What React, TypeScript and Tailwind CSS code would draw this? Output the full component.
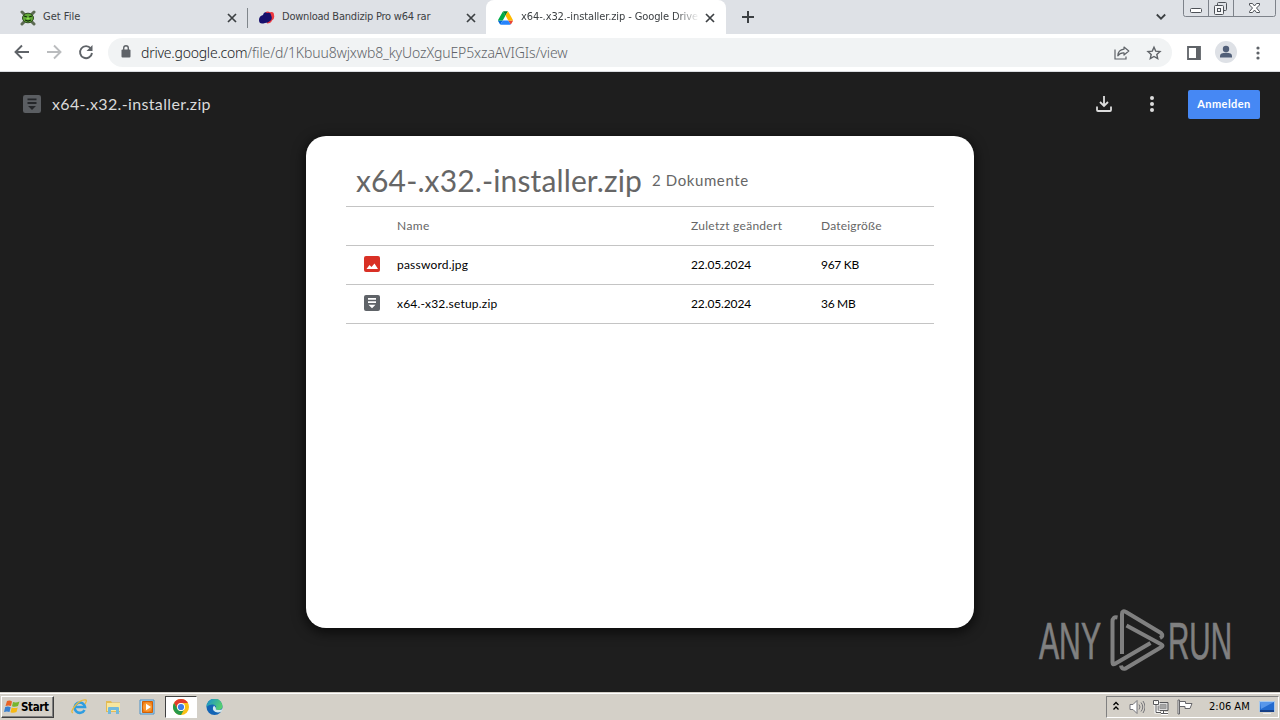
import React from "react";

const tahoma = "font-['DejaVu_Sans_Condensed','DejaVu_Sans',sans-serif] [font-stretch:condensed]";
const google = "font-['Lato',sans-serif]";

function Close({ className = "" }: { className?: string }) {
  return (
    <svg className={className} width="10" height="10" viewBox="0 0 10 10" stroke="#3c4043" strokeWidth="1.7">
      <path d="M1 1l8 8M9 1l-8 8" />
    </svg>
  );
}

function ZipIcon({ size, bg, fg }: { size: number; bg: string; fg: string }) {
  return (
    <svg width={size} height={size} viewBox="0 0 16 16">
      <rect width="16" height="16" rx="2" fill={bg} />
      <path d="M4 3h8v1.7H4zM4 6.300h8V8H4zM4.500 9.700h7L8 13.300z" fill={fg} />
    </svg>
  );
}

function DriveLogo() {
  return (
    <svg width="15" height="14" viewBox="0 0 87.3 78">
      <path d="m6.6 66.85 3.85 6.65c.8 1.4 1.95 2.5 3.3 3.3l13.75-23.8h-27.5c0 1.55.4 3.1 1.2 4.5z" fill="#0066da" />
      <path d="m43.65 25-13.75-23.8c-1.35.8-2.5 1.9-3.3 3.3l-25.4 44a9 9 0 0 0-1.2 4.5h27.5z" fill="#00ac47" />
      <path d="m73.55 76.8c1.35-.8 2.5-1.9 3.3-3.3l1.6-2.75 7.65-13.25c.8-1.4 1.2-2.95 1.2-4.5h-27.5l5.85 11.5z" fill="#ea4335" />
      <path d="m43.65 25 13.75-23.8c-1.35-.8-2.9-1.2-4.5-1.2h-18.5c-1.6 0-3.15.45-4.5 1.2z" fill="#00832d" />
      <path d="m59.8 53h-32.3l-13.75 23.8c1.35.8 2.9 1.2 4.5 1.2h50.8c1.6 0 3.15-.45 4.5-1.2z" fill="#2684fc" />
      <path d="m73.4 26.5-12.7-22c-.8-1.4-1.95-2.5-3.3-3.3l-13.75 23.8 16.15 28h27.45c0-1.55-.4-3.1-1.2-4.5z" fill="#ffba00" />
    </svg>
  );
}

function TabStrip() {
  return (
    <div className={`flex h-[34px] bg-[#dee1e6] text-[11px] text-[#3c4043] ${tahoma}`}>
      <div className="flex w-[247px] items-center pt-px pl-5">
        <svg width="16" height="16" viewBox="0 0 16 16">
          <path d="M2 2l3 3M14 2l-3 3M2 14l3-3M14 14l-3-3" stroke="#5d6b54" strokeWidth="3" strokeLinecap="round" />
          <ellipse cx="8" cy="8" rx="5.500" ry="4.800" fill="#62a838" stroke="#2f4a20" />
          <path d="M4 6l3 1M9 7l3-1M5 10l3 1 3-1" stroke="#102b08" strokeWidth="1.300" fill="none" />
          <path d="M6.500 8.500h3" stroke="#8be04a" strokeWidth="1.600" />
        </svg>
        <span className="ml-[7px] w-[184px] whitespace-nowrap">Get File</span>
        <Close />
      </div>
      <div className="flex w-[239px] items-center pt-px">
        <div className="h-5 w-px bg-[#80868b]" />
        <svg className="ml-[10px]" width="17" height="14" viewBox="0 0 17 14">
          <path d="M7 2Q9-.5 12 1.200 16 0 16 4q1 4-2 5.500-1 3-5 3z" fill="#ee3840" />
          <path d="M5 4Q6 0 9 2q4-1 4 2 2 4-1 6-2 2-5 2-6 2-6-3Q1 5 5 4z" fill="#17106d" />
        </svg>
        <span className="ml-[7px] w-[184px] tracking-[-0.22px] whitespace-nowrap">Download Bandizip Pro w64 rar</span>
        <Close />
      </div>
      <div className="relative flex w-60 items-center rounded-t-lg bg-white pt-px pl-3">
        <DriveLogo />
        <span className="ml-2 w-[178px] tracking-[-0.1px] whitespace-nowrap [mask-image:linear-gradient(to_right,black_155px,transparent_178px)]">x64-.x32.-installer.zip - Google Drive</span>
        <Close className="ml-[6px]" />
      </div>
      <svg className="mt-[11px] ml-[16px]" width="12" height="12" viewBox="0 0 12 12" stroke="#3c4043" strokeWidth="2">
        <path d="M6 0v12M0 6h12" />
      </svg>
      <svg className="mt-[13px] ml-[402px]" width="10" height="8" viewBox="0 0 10 8" fill="none" stroke="#3c4043" strokeWidth="1.800">
        <path d="M.8 1.500l4.200 4.200 4.200-4.200" />
      </svg>
      <svg className="ml-[17px]" width="94" height="18" viewBox="0 0 94 18" fill="none" stroke="#7d828a">
        <path d="M.5 0v14.500q0 2 2 2h88q2 0 2-2V0M25.500 0v16M50.500 0v16" />
        <g stroke="#4d5157">
          <rect x="7.500" y="8.500" width="11" height="4" rx="1" fill="#fff" />
          <rect x="34.500" y="2.500" width="9" height="8" rx="1" />
          <rect x="31.500" y="5.500" width="9" height="9" rx="1" fill="#f4f5f7" />
          <rect x="34.500" y="8.500" width="3" height="3" />
          <path d="M66.500 3.500h3l2 2.500 2-2.500h3v1.500L73.500 8l3 3.500v1h-3l-2-2.500-2 2.500h-3v-1l3-3.500-3-3z" fill="#fff" />
        </g>
      </svg>
    </div>
  );
}

function Toolbar() {
  return (
    <div className={`flex h-[38px] items-center border-b border-[#dadce0] bg-white ${tahoma}`}>
      <svg className="-mt-[2px] ml-[14px]" width="80" height="16" viewBox="0 0 80 16" fill="none" strokeWidth="1.900">
        <path d="M15 8H2M8 1.500L1.500 8 8 14.500" stroke="#5f6368" />
        <path d="M33 8h13M40 1.500L46.500 8 40 14.500" stroke="#babcbe" />
        <path d="M76.800 4.500A6 6 0 1 0 78 9" stroke="#5f6368" />
        <path d="M78.500 1v6h-6z" fill="#5f6368" />
      </svg>
      <div className="ml-[14px] flex h-[29px] w-[1064px] items-center rounded-full bg-[#f1f3f4] pl-[13px]">
        <svg className="-mt-[2px]" width="10" height="13" viewBox="0 0 10 13">
          <rect x=".5" y="4.500" width="9" height="8" rx="1" fill="#5f6368" />
          <path d="M2.700 5V3a2.300 2.300 0 0 1 4.600 0v2" fill="none" stroke="#5f6368" strokeWidth="1.400" />
        </svg>
        <div className="ml-[10px] w-[973px] font-['Noto_Sans',sans-serif] text-[14px] font-light whitespace-nowrap text-[#5f6368]">
          <span className="tracking-[-0.23px] text-[#202124]">drive.google.com</span><span className="tracking-[-0.12px]">/file/d/1Kbuu8wjxwb8_kyUozXguEP5xzaAVIGIs/view</span>
        </div>
        <svg width="16" height="14" viewBox="0 0 16 14" fill="none" stroke="#5f6368" strokeWidth="1.200">
          <path d="M1 3.500V13h11v-2.500" />
          <path d="M10 1l4.800 4L10 9V6.800Q6 6.500 3.800 9.800 4 4 10 3.200z" strokeLinejoin="round" />
        </svg>
        <svg className="ml-4" width="16" height="16" viewBox="0 0 16 16" fill="none" stroke="#5f6368" strokeWidth="1.400">
          <path d="M8 2.200l1.700 3.900 4.300.4-3.200 2.900.9 4.300L8 11.500l-3.700 2.200.9-4.300L2 6.500l4.300-.4z" />
        </svg>
      </div>
      <svg className="ml-[15px]" width="14" height="14" viewBox="0 0 14 14">
        <path d="M1 1h12v12H1z" fill="none" stroke="#5f6368" strokeWidth="1.800" />
        <path d="M9 1h4v12H9z" fill="#5f6368" />
      </svg>
      <svg className="-mt-px ml-[14px]" width="22" height="22" viewBox="0 0 22 22">
        <circle cx="11" cy="11" r="11" fill="#dee1e6" />
        <circle cx="11" cy="8" r="3.200" fill="#515f78" />
        <path d="M5 16.500v-1.500q0-3.200 6-3.200t6 3.200v1.500z" fill="#515f78" />
      </svg>
      <svg className="ml-[19px]" width="4" height="14" viewBox="0 0 4 14" fill="#5f6368">
        <circle cx="2" cy="2" r="1.600" /><circle cx="2" cy="7" r="1.600" /><circle cx="2" cy="12" r="1.600" />
      </svg>
    </div>
  );
}

function Row({ icon, name, date, size, head = false }: { icon?: React.ReactNode; name: string; date: string; size: string; head?: boolean }) {
  return (
    <div className={`flex h-[39px] items-center border-b border-[#c4c4c4] pl-[18px] text-[12px] whitespace-nowrap ${head ? "text-[#666]" : "text-black"}`}>
      <div className="w-[33px]">{icon}</div>
      <div className="w-[294px]"><span className={head ? "tracking-[0.4px]" : "tracking-[0.2px]"}>{name}</span></div>
      <div className="w-[130px]"><span className={head ? "tracking-[0.28px]" : "tracking-[-0.12px]"}>{date}</span></div>
      <div className={head ? "tracking-[0.2px]" : "tracking-[-0.3px]"}>{size}</div>
    </div>
  );
}

function Watermark() {
  return (
    <svg className="absolute top-[536px] left-[1036px]" width="200" height="68" viewBox="1036 608 200 68" fill="#808080">
      <g className="font-['Liberation_Sans_Narrow','Liberation_Sans',sans-serif]" fontSize="52" stroke="#808080" strokeWidth=".7">
        <text x="1039" y="659" textLength="62" lengthAdjust="spacingAndGlyphs">ANY</text>
        <text x="1168" y="659" textLength="64" lengthAdjust="spacingAndGlyphs">RUN</text>
      </g>
      <g fill="none" stroke="#808080" strokeWidth="4" strokeLinejoin="round">
        <path d="M1117.500 617.500q-5-1-5 4v41q0 3 3 1l35-20.500" />
        <path d="M1122 654v-40q0-4 4-2l35 21q3 3-1 5" />
        <path d="M1126.500 625.500l35 19q2 1 0 2.500l-36 21.500q-4 1-4.500-3" />
      </g>
    </svg>
  );
}

function Viewer() {
  return (
    <main className={`relative h-[620px] bg-[#1e1e1e] ${google}`}>
      <div className="flex h-16 items-center pl-[23px] text-[#dadada]">
        <ZipIcon size={18} bg="#5b5e62" fg="#25272a" />
        <span className="-mt-px ml-[11px] w-[1044px] text-[16px] tracking-[0.35px]">x64-.x32.-installer.zip</span>
        <svg width="16" height="16" viewBox="0 0 16 16" fill="none" stroke="#ddd" strokeWidth="1.800">
          <path d="M8 0v10M4 6l4 4 4-4M1 10.500V14q0 1 1 1h12q1 0 1-1v-3.500" />
        </svg>
        <svg className="ml-[38px]" width="4" height="16" viewBox="0 0 4 16" fill="#ddd">
          <circle cx="2" cy="2" r="2" /><circle cx="2" cy="8" r="2" /><circle cx="2" cy="14" r="2" />
        </svg>
        <button className="ml-[34px] h-[29px] w-[72px] rounded-[2px] bg-[#4688f4] text-[11px] font-bold tracking-[0.45px] text-white">Anmelden</button>
      </div>
      <section className="mx-auto h-[492px] w-[668px] rounded-[20px] bg-white px-10 shadow-[0_3px_12px_2px_rgba(0,0,0,0.6)]">
        <div className="flex h-[71px] items-end border-b border-[#c4c4c4] pl-[10px] whitespace-nowrap text-[#666]">
          <h1 className="w-[296px] pb-[8px] text-[30px] leading-9 tracking-[0.13px]">x64-.x32.-installer.zip</h1>
          <span className="pb-[16px] text-[15px] leading-5 tracking-[0.6px]">2 Dokumente</span>
        </div>
        <Row head name="Name" date="Zuletzt geändert" size="Dateigröße" />
        <Row
          icon={
            <svg className="-mt-[2px]" width="16" height="16" viewBox="0 0 16 16">
              <rect width="16" height="16" rx="2" fill="#d93025" />
              <path d="M2.500 13l3-4 2 2 3-3.500 3.500 5.500z" fill="#fff" />
            </svg>
          }
          name="password.jpg" date="22.05.2024" size="967 KB"
        />
        <Row icon={<div className="-mt-[2px]"><ZipIcon size={16} bg="#5f6368" fg="#fff" /></div>} name="x64.-x32.setup.zip" date="22.05.2024" size="36 MB" />
      </section>
      <Watermark />
    </main>
  );
}

function Taskbar() {
  return (
    <footer className={`flex h-7 items-center border-t border-[#d4d0c8] bg-[#d4d0c8] pt-px text-[11px] text-black shadow-[inset_0_1px_0_#fff] ${tahoma}`}>
      <div className="ml-px flex h-[22px] w-[53px] items-center border border-t-white border-r-[#404040] border-b-[#404040] border-l-white pl-[2px] shadow-[inset_-1px_-1px_0_#808080]">
        <svg width="16" height="16" viewBox="0 0 16 16">
          <path d="M3 2q3-1 5 .5L7 7Q4.500 6 1.500 7z" fill="#e96325" />
          <path d="M9 3q3 1 6.500-.5L14 7q-3 1.500-6 .3z" fill="#77b52f" />
          <path d="M1.200 8q3-1 5.500.3L5.500 13Q3 12 0 13z" fill="#3980d0" />
          <path d="M7.700 8.500q3 1 6 0L12.500 13q-3 1.500-6 .3z" fill="#f7b914" />
        </svg>
        <span className="ml-px pt-[2px] text-[11.5px] font-bold tracking-[-0.35px]">Start</span>
      </div>
      <svg className="ml-[17px]" width="17" height="16" viewBox="0 0 17 16" fill="none">
        <path d="M13.500 11A5.200 5.200 0 1 1 14 8H4.500" stroke="#2f9de0" strokeWidth="2.600" />
        <path d="M2 14Q-1 13 4 7 10 0 15 1q1 1-1 4" stroke="#e9b93c" strokeWidth="1.300" />
      </svg>
      <svg className="ml-[17px]" width="17" height="16" viewBox="0 0 17 16">
        <path d="M1 2h5l1 1.500h8V13H1z" fill="#e3bb54" />
        <path d="M2 4h13v8H2z" fill="#f8e69d" />
        <path d="M3 15V9q0-1 1-1h9q1 0 1 1v6h-3v-4H6v4z" fill="#72b9dc" />
      </svg>
      <svg className="ml-[17px]" width="16" height="16" viewBox="0 0 16 16">
        <path d="M1 1h14v14H1z" fill="#b9dcf1" stroke="#4c93c9" />
        <path d="M3.500 2.500h10v11h-10z" fill="#f07b12" stroke="#cf6108" />
        <circle cx="8.500" cy="8" r="4.700" fill="#f89832" />
        <path d="M7 4.800L12 8l-5 3.200z" fill="#fff" />
      </svg>
      <div className="ml-[10px] flex h-[22px] w-8 items-center justify-center border border-t-[#404040] border-r-white border-b-white border-l-[#404040] bg-white">
        <svg width="16" height="16" viewBox="0 0 16 16">
          <circle cx="8" cy="8" r="8" fill="#fbc116" />
          <path d="M1.070 4A8 8 0 0 1 14.930 4H8a4 4 0 0 0-3.460 6z" fill="#e33b2e" />
          <path d="M1.070 4A8 8 0 0 0 8 16l3.460-6A4 4 0 0 1 4.540 10z" fill="#27994a" />
          <circle cx="8" cy="8" r="4" fill="#fff" /><circle cx="8" cy="8" r="3.100" fill="#3e7de9" />
        </svg>
      </div>
      <svg className="ml-[9px]" width="17" height="16" viewBox="0 0 17 16">
        <defs>
          <linearGradient id="edge" x2="1" y2=".5"><stop stopColor="#168bd3" /><stop offset="1" stopColor="#55cf70" /></linearGradient>
        </defs>
        <circle cx="8.500" cy="8" r="8" fill="#1364b5" />
        <path d="M.5 8A8 8 0 0 1 16.500 7q0 4-4.500 4-3 0-2-2 .5-3-3-3.500Q3 5 .5 8z" fill="url(#edge)" />
        <path d="M8 6.500q-3 4 1.500 6.500 3 1 6-.5l1.500-3q-2 1.700-5 1.500-3-.2-2-2z" fill="#d4e9ef" />
      </svg>
      <div className="mr-px ml-auto flex h-[22px] w-[173px] items-center border border-t-[#808080] border-r-white border-b-white border-l-[#808080] pl-[6px]">
        <svg className="-mt-[2px]" width="6" height="10" viewBox="0 0 6 10" fill="none" stroke="#000" strokeWidth="1.300">
          <path d="M.5 4L3 1.500 5.500 4M.5 8.500L3 6l2.500 2.500" />
        </svg>
        <svg className="ml-[10px]" width="16" height="16" viewBox="0 0 16 16" fill="none" stroke="#75757a">
          <path d="M1 5.500h3L8 1.500v13l-4-4H1z" fill="#fff" />
          <path d="M10 5.500q2 2.500 0 5M12 3.500q3.500 4.500 0 9M14 2q4 6 0 12" />
        </svg>
        <svg className="ml-2" width="16" height="16" viewBox="0 0 16 16" fill="none" stroke="#57575a">
          <path d="M5 3.500h10v8H5z" fill="#ddd" /><path d="M7 5.500h6v4H7z" fill="#a5a5a5" stroke="#999" />
          <path d="M8 14.500h7M10 12v2M1 1v4h4V1M3 5v8h4" stroke="#fff" strokeWidth="3" />
          <path d="M8 14.500h7M10.500 12v2M.5 1.500v4h5v-4zM3 5.500v8h5" />
        </svg>
        <svg className="ml-2" width="16" height="16" viewBox="0 0 16 16" stroke="#66666a" fill="#fff">
          <path d="M1 1h1.500v14H1zM2.500 2.500h6v2h6.500l-2 5H8v-2H2.500z" />
        </svg>
        <span className="ml-4 w-[50px] pt-px text-[11px] whitespace-nowrap">2:06 AM</span>
        <svg width="16" height="15" viewBox="0 0 16 15">
          <path d="M.5 1.500h15v10H.5z" fill="#236bcf" stroke="#a8c9ec" />
          <path d="M1 2h14L2 9z" fill="#5797eb" />
          <path d="M1 10h14v2H1z" fill="#163f86" /><path d="M4 13.500h8" stroke="#eee" />
        </svg>
      </div>
    </footer>
  );
}

export default function App() {
  return (
    <div className="h-[720px] w-[1280px] overflow-hidden">
      <TabStrip />
      <Toolbar />
      <Viewer />
      <Taskbar />
    </div>
  );
}
